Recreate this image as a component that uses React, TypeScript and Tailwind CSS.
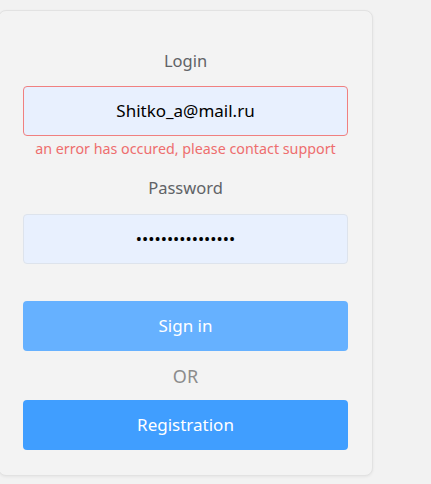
import React from "react"

export default function App() {
  return (
    <div className="min-h-[484px] w-[431px] bg-[#f2f2f2] pt-[10px] font-['Noto_Sans',_'Open_Sans',_sans-serif]">
      <div className="-ml-[2px] flex w-[375px] flex-col items-center rounded-lg border border-[#e2e2e2] bg-[#f3f3f3] px-[24px] pb-[25px] pt-[38px] shadow-[0_1px_3px_rgba(0,0,0,0.06)]">
        <label className="text-[16.5px] leading-6 text-[#606266]">Login</label>
        <div className="mt-[13px] flex h-[50px] w-[325px] items-center justify-center rounded-[4px] border border-[#f08080] bg-[#e8f0fe] text-[17px] text-black">
          Shitko_a@mail.ru
        </div>
        <p className="mt-[3px] text-[14.3px] leading-5 text-[#ee6e6e]">
          an error has occured, please contact support
        </p>
        <label className="mt-[17px] text-[16.5px] leading-6 text-[#606266]">Password</label>
        <div className="mt-[14px] flex h-[50px] w-[325px] items-center justify-center rounded-[4px] border border-[#dde3ec] bg-[#e8f0fe] text-[16.5px] text-black">
          ••••••••••••••••
        </div>
        <button className="mt-[37px] h-[50px] w-[325px] rounded-[4px] bg-[#66b1ff] text-[17px] text-white">
          Sign in
        </button>
        <span className="mt-[13px] text-[18px] leading-6 text-[#8c8c8c]">OR</span>
        <button className="mt-[12px] h-[50px] w-[325px] rounded-[4px] bg-[#409eff] text-[17px] text-white">
          Registration
        </button>
      </div>
    </div>
  )
}
